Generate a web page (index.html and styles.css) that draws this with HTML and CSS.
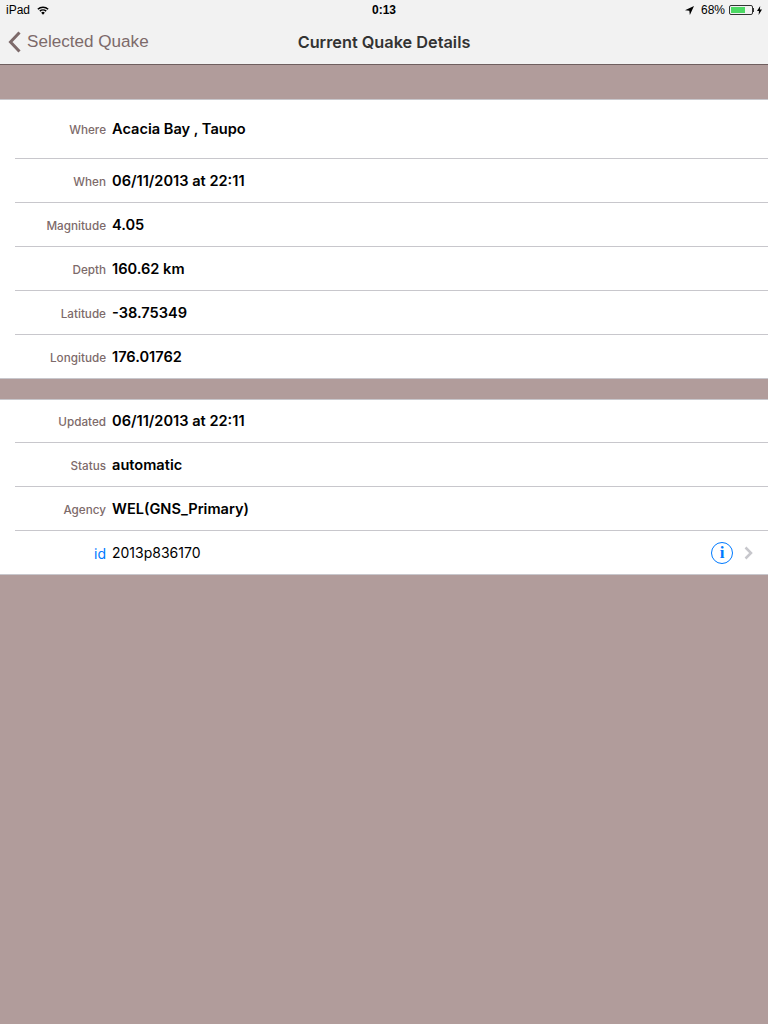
FILE: index.html
```html
<!DOCTYPE html>
<html lang="en">
<head>
  <meta charset="UTF-8">
  <meta name="viewport" content="width=device-width, initial-scale=1.0">
  <title>Current Quake Details</title>
  <link rel="stylesheet" href="styles.css">
</head>
<body>
  <div class="top-bar">
    <div class="status-bar">
      <div class="status-left">
        <span>iPad</span>
        <svg class="wifi" width="12" height="9" viewBox="0 0 14 10">
          <path d="M1 3.6 A8.6 8.6 0 0 1 13 3.6" fill="none" stroke="#000" stroke-width="1.8"/>
          <path d="M3.3 5.8 A5.4 5.4 0 0 1 10.7 5.8" fill="none" stroke="#000" stroke-width="1.8"/>
          <path d="M7 10 L4.9 7.6 A3 3 0 0 1 9.1 7.6 Z" fill="#000"/>
        </svg>
      </div>
      <div class="status-time">0:13</div>
      <div class="status-right">
        <svg class="arrow" width="9" height="9" viewBox="0 0 10 10"><path d="M10 0 L0 4.6 L4.8 5.2 L5.4 10 Z" fill="#000"/></svg>
        <span>68%</span>
        <div class="battery"><div class="battery-fill"></div></div>
        <div class="battery-tip"></div>
        <svg class="bolt" width="5" height="9" viewBox="0 0 5 9"><path d="M3.2 0 L0 5 L2 5 L1.6 9 L5 3.6 L2.9 3.6 Z" fill="#000"/></svg>
      </div>
    </div>
    <div class="nav-bar">
      <div class="back">
        <svg width="14" height="22" viewBox="0 0 14 22"><path d="M11.5 1.5 L2.5 11 L11.5 20.5" fill="none" stroke="#7d6a6a" stroke-width="3"/></svg>
        <span>Selected Quake</span>
      </div>
      <div class="nav-title">Current Quake Details</div>
    </div>
  </div>

  <div class="spacer spacer-top"></div>

  <div class="group">
    <div class="row row-tall"><div class="label">Where</div><div class="value">Acacia Bay , Taupo</div></div>
    <div class="row"><div class="label">When</div><div class="value">06/11/2013 at 22:11</div></div>
    <div class="row"><div class="label">Magnitude</div><div class="value">4.05</div></div>
    <div class="row"><div class="label">Depth</div><div class="value">160.62 km</div></div>
    <div class="row"><div class="label">Latitude</div><div class="value">-38.75349</div></div>
    <div class="row"><div class="label">Longitude</div><div class="value">176.01762</div></div>
  </div>

  <div class="spacer spacer-mid"></div>

  <div class="group">
    <div class="row row-short"><div class="label">Updated</div><div class="value">06/11/2013 at 22:11</div></div>
    <div class="row"><div class="label">Status</div><div class="value">automatic</div></div>
    <div class="row"><div class="label">Agency</div><div class="value">WEL(GNS_Primary)</div></div>
    <div class="row">
      <div class="label label-blue">id</div>
      <div class="value value-plain">2013p836170</div>
      <div class="info">i</div>
      <svg class="chevron" width="9" height="14" viewBox="0 0 9 14"><path d="M1.5 1.5 L7 7 L1.5 12.5" fill="none" stroke="#c7c7cc" stroke-width="2.5"/></svg>
    </div>
  </div>
</body>
</html>
```

FILE: styles.css
```css
body {
  margin: 0;
  height: 1024px;
  overflow: hidden;
  background-color: #b19c9b;
  font-family: "Liberation Sans", Arial, sans-serif;
  color: #000;
}

.top-bar {
  height: 64px;
  background-color: #f2f2f2;
  border-bottom: 1px solid #6f5f5f;
}

.status-bar {
  height: 20px;
  padding: 0 6px;
  display: grid;
  grid-template-columns: 1fr auto 1fr;
  align-items: center;
  font-size: 12px;
}

.status-left {
  display: flex;
  align-items: center;
  gap: 7px;
}

.status-time {
  font-weight: bold;
  font-size: 12px;
}

.status-right {
  display: flex;
  align-items: center;
  justify-content: flex-end;
}

.status-right span {
  margin: 0 4px 0 7px;
}

.battery {
  width: 20px;
  height: 6px;
  padding: 1px;
  border: 1px solid #333;
  border-radius: 2px;
}

.battery-fill {
  width: 68%;
  height: 100%;
  background-color: #4cd964;
}

.battery-tip {
  width: 1px;
  height: 4px;
  margin-right: 3px;
  background-color: #333;
}

.nav-bar {
  height: 44px;
  position: relative;
  display: flex;
  align-items: center;
  justify-content: center;
}

.back {
  position: absolute;
  left: 8px;
  top: 0;
  height: 44px;
  display: flex;
  align-items: center;
  gap: 5px;
  font-size: 17.1px;
  color: #7d6a6a;
}

.nav-title {
  font-family: Inter, "Liberation Sans", sans-serif;
  font-size: 16.3px;
  font-weight: 600;
  color: #333;
}

.spacer-top {
  height: 35px;
}

.spacer-mid {
  height: 21px;
}

.group {
  background-color: #fff;
  border-top: 1px solid #c8c7cc;
  border-bottom: 1px solid #c8c7cc;
  margin-top: -1px;
}

.row {
  height: 43px;
  margin-left: 15px;
  padding-right: 15px;
  display: flex;
  align-items: center;
  border-bottom: 1px solid #c8c7cc;
}

.row:last-child {
  border-bottom: none;
}

.row-tall {
  height: 59px;
  padding-bottom: 1px;
  box-sizing: border-box;
}

.row-short {
  height: 42px;
}

.label {
  width: 91px;
  margin-right: 6px;
  padding-top: 2px;
  text-align: right;
  font-family: Inter, "Liberation Sans", sans-serif;
  font-size: 11.7px;
  font-weight: 500;
  color: #7d6a6a;
}

.label-blue {
  color: #007aff;
  font-size: 14px;
  font-weight: 400;
}

.value {
  flex: 1;
  font-family: Inter, "Liberation Sans", sans-serif;
  font-size: 14.6px;
  font-weight: 600;
}

.value-plain {
  font-weight: 400;
  font-size: 14px;
}

.info {
  width: 20px;
  height: 20px;
  border: 1px solid #007aff;
  border-radius: 50%;
  margin-right: 11px;
  display: flex;
  align-items: center;
  justify-content: center;
  font-family: "Liberation Serif", serif;
  font-weight: bold;
  font-size: 17px;
  color: #007aff;
}
```
